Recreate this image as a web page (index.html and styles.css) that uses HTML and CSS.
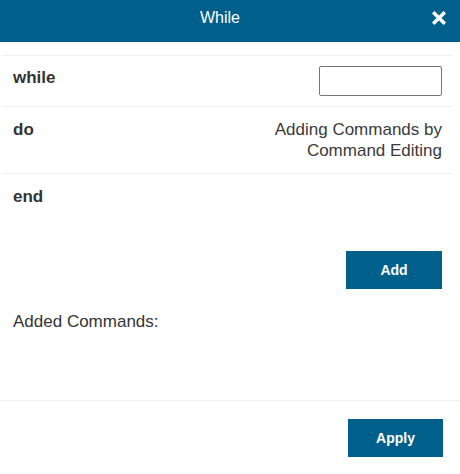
FILE: index.html
```html
<!DOCTYPE html>
<html lang="en">
<head>
<meta charset="utf-8">
<title>While</title>
<link rel="stylesheet" href="styles.css">
</head>
<body>
<div class="dialog">
  <header class="dlg-header">
    <h1 class="dlg-title">While</h1>
    <button class="dlg-close" type="button" aria-label="Close">
      <svg width="16" height="16" viewBox="0 0 16 16" aria-hidden="true">
        <path d="M2.2 2.2 L13.8 13.8 M13.8 2.2 L2.2 13.8" stroke="#fff" stroke-width="3.4" fill="none"/>
      </svg>
    </button>
  </header>
  <main class="dlg-body">
    <div class="rows">
      <div class="row row-input">
        <span class="label label-input">while</span>
        <input class="cond" type="text">
      </div>
      <div class="row">
        <span class="label">do</span>
        <span class="value">Adding Commands by<br>Command Editing</span>
      </div>
      <div class="row">
        <span class="label">end</span>
      </div>
    </div>
    <div class="add-wrap">
      <button class="btn btn-add" type="button">Add</button>
    </div>
    <div class="added">Added Commands:</div>
  </main>
  <footer class="dlg-footer">
    <button class="btn btn-apply" type="button">Apply</button>
  </footer>
</div>
</body>
</html>
```

FILE: styles.css
```css
* { box-sizing: border-box; }
html, body {
  margin: 0;
  padding: 0;
  background: #fff;
}
body {
  font-family: "Liberation Sans", Arial, sans-serif;
  color: #333;
  width: 460px;
}
.dialog {
  display: flex;
  flex-direction: column;
}
.dlg-header {
  height: 42px;
  background: #005f8b;
  display: flex;
  align-items: flex-start;
  padding-right: 13px;
}
.dlg-title {
  flex: 1;
  margin: 0;
  padding: 7px 0 0 9px;
  text-align: center;
  font-size: 16px;
  line-height: 22px;
  font-weight: normal;
  color: #fff;
}
.dlg-close {
  margin-top: 10px;
  width: 16px;
  height: 16px;
  padding: 0;
  border: 0;
  background: transparent;
  display: block;
  cursor: pointer;
}
.dlg-close svg { display: block; }
.dlg-body {
  padding-top: 13px;
}
.rows {
  margin: 0 8px 0 3px;
}
.row {
  display: flex;
  justify-content: space-between;
  align-items: flex-start;
  padding: 12px 10px;
  border-top: 1px solid #eeeeee;
  font-size: 17px;
  line-height: 21px;
}
.row-input {
  padding: 10px 10px;
}
.label {
  font-weight: bold;
  color: #333;
}
.label-input {
  padding-top: 1px;
}
.value {
  text-align: right;
  color: #3a3a3a;
}
.cond {
  width: 123px;
  height: 30px;
  margin: 0;
  border: 1px solid #767676;
  border-radius: 2px;
  padding: 2px 4px;
  font: inherit;
  background: #fff;
}
.add-wrap {
  display: flex;
  justify-content: flex-end;
  margin-top: 32px;
  padding-right: 18px;
}
.btn {
  background: #005f8b;
  color: #fff;
  border: 0;
  border-radius: 0;
  font-family: "Liberation Sans", Arial, sans-serif;
  font-weight: bold;
  font-size: 14px;
  line-height: 38px;
  height: 38px;
  padding: 0;
  cursor: pointer;
}
.btn-add { width: 96px; }
.added {
  margin: 22px 0 0;
  padding: 0 0 68px 13px;
  font-size: 17px;
  line-height: 21px;
  color: #333;
}
.dlg-footer {
  border-top: 1px solid #eeeeee;
  display: flex;
  justify-content: flex-end;
  padding: 18px 17px 0 0;
}
.btn-apply { width: 95px; }
```
